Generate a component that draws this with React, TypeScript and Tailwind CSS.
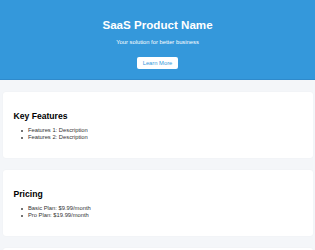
import React from 'react';

const sections = [
  { title: 'Key Features', items: ['Features 1: Description', 'Features 2: Description'] },
  { title: 'Pricing', items: ['Basic Plan: $9.99/month', 'Pro Plan: $19.99/month'] },
  { title: 'Contact Us', items: ['Email: support@example.com'] },
];

export default function App() {
  return (
    <div className="min-h-screen bg-[#f4f6f9] font-['Liberation_Sans',Arial,sans-serif] text-[#222]">
      <header className="flex flex-col items-center bg-[#3498db] text-white text-center pt-[18px] pb-[10px] border-b border-[#2f8acb]">
        <h1 className="text-[11.6px] leading-[13px] font-bold">SaaS Product Name</h1>
        <p className="mt-[7.5px] text-[5.8px] leading-[6.5px]">Your solution for better business</p>
        <button className="mt-[12px] h-[12px] px-[5.7px] bg-white text-[#3498db] text-[5.8px] leading-[6.5px] rounded-[2px]">
          Learn More
        </button>
      </header>

      <main className="mt-[12px] mx-[2.5px] flex flex-col gap-[12px]">
        {sections.map((section) => (
          <section
            key={section.title}
            className="bg-white rounded-[3px] px-[11px] pt-[11px] pb-[11px] shadow-[0_0_2px_rgba(0,0,0,0.04)]"
          >
            <h2 className="mt-[7.5px] text-[8.6px] leading-[10px] font-bold text-black">{section.title}</h2>
            <ul className="mt-[6.5px] mb-[6px] pl-[14.4px] text-[5.8px] leading-[7px] text-[#333]">
              {section.items.map((item) => (
                <li key={item} className="relative">
                  <span className="absolute left-[-6.5px] top-[3px] w-[1.6px] h-[1.6px] rounded-full bg-[#444]" />
                  {item}
                </li>
              ))}
            </ul>
          </section>
        ))}
      </main>
    </div>
  );
}
